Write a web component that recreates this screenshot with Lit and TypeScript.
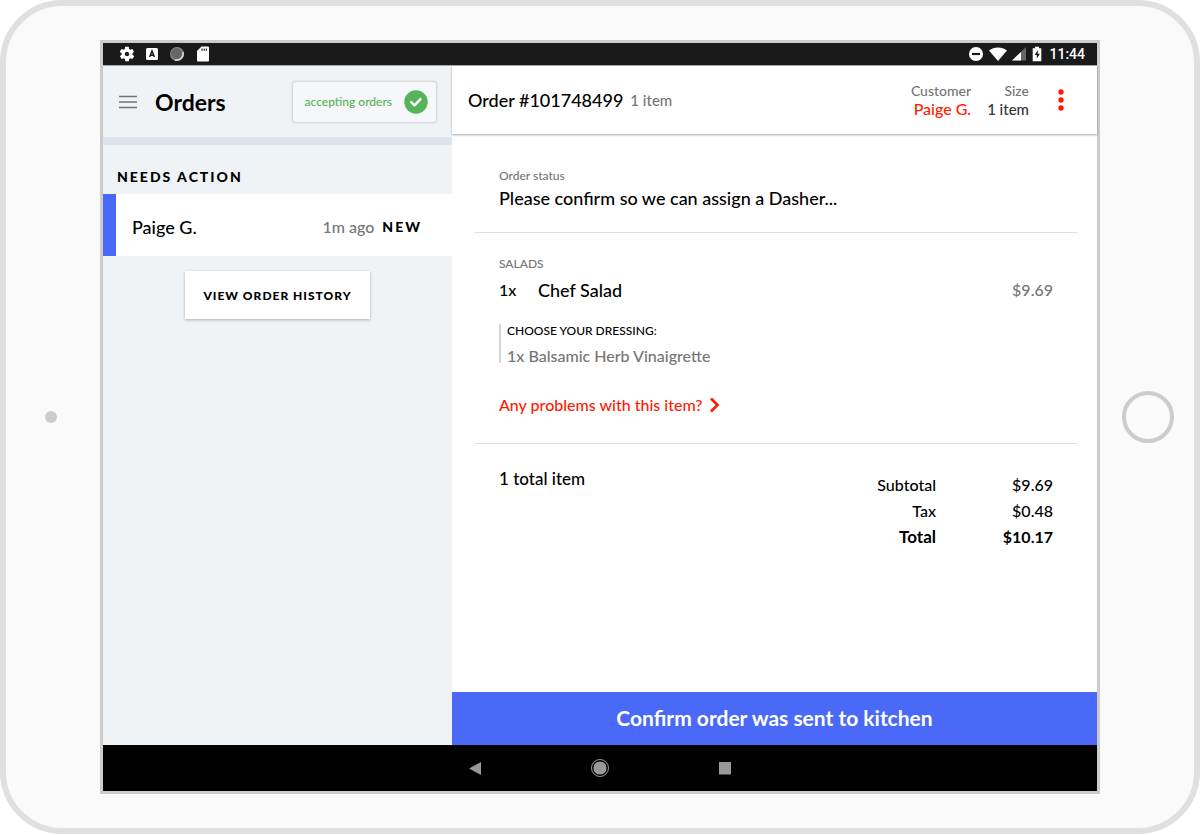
import { LitElement, html, css } from "lit";
import { customElement, property } from "lit/decorators.js";

@customElement("status-bar")
class StatusBar extends LitElement {
  static styles = css`
    :host {
      display: flex;
      align-items: center;
      justify-content: space-between;
      height: 23px;
      padding: 0 12px 0 16px;
      background: #1a1a1a;
      border-bottom: 1px solid #a8a8a8;
      box-sizing: border-box;
      color: #fff;
      font: 500 14px/20px Roboto, sans-serif;
    }
    .group {
      display: flex;
      align-items: center;
    }
    .left {
      gap: 9px;
    }
    .right {
      gap: 4px;
    }
    .time {
      padding-left: 1px;
    }
    svg {
      display: block;
    }
  `;
  render() {
    return html`
      <div class="group left">
        <svg width="16" height="16" viewBox="1 1 22 22" fill="#fff">
          <path d="M19.4 13c0-.3.1-.6.1-1s0-.7-.1-1l2.100-1.600c.2-.2.200-.400.100-.600l-2-3.500c-.1-.2-.4-.3-.6-.2l-2.500 1c-.5-.4-1.100-.7-1.700-1l-.4-2.600c0-.3-.2-.5-.5-.5h-4c-.2 0-.4.2-.5.400l-.4 2.700c-.6.2-1.100.6-1.700 1l-2.500-1c-.2-.1-.5 0-.6.200l-2 3.500c-.1.2-.1.500.1.600L4.600 11c0 .3-.1.600-.1 1s0 .7.1 1l-2.100 1.600c-.2.2-.2.400-.1.600l2 3.500c.1.2.4.3.6.2l2.500-1c.5.4 1.100.7 1.700 1l.4 2.600c0 .3.2.5.5.5h4c.2 0 .5-.2.500-.400l.4-2.700c.6-.3 1.200-.6 1.700-1l2.500 1c.2.100.5 0 .6-.200l2-3.500c.1-.2.1-.500-.1-.600zM12 15a3 3 0 1 1 0-6 3 3 0 0 1 0 6z" />
        </svg>
        <svg width="16" height="16" viewBox="0 0 16 16">
          <rect x="2" y="2" width="12" height="12" rx="1.500" fill="#fff" />
          <path d="M5.600 11 8 5l2.400 6M6.500 9.200h3" fill="none" stroke="#1a1a1a" stroke-width="1.500" />
        </svg>
        <svg width="16" height="16" viewBox="0 0 16 16">
          <circle cx="8" cy="8" r="7" fill="#8a8a8a" />
          <circle cx="7.500" cy="7.500" r="5.500" fill="#666" />
          <path d="M14 6a6.500 6.500 0 0 1-8 8" fill="none" stroke="#ddd" stroke-width="1.300" />
        </svg>
        <svg width="18" height="16" viewBox="-1 0 18 16">
          <path d="M6.500 .5H13a1 1 0 0 1 1 1v13a1 1 0 0 1-1 1H3a1 1 0 0 1-1-1V5z" fill="#fff" />
          <path d="M7 2.500v2.200M9.200 2.500v2.200M11.400 2.500v2.200" stroke="#1a1a1a" stroke-width="1.100" />
        </svg>
      </div>
      <div class="group right">
        <svg width="16" height="16" viewBox="0 0 16 16">
          <circle cx="8" cy="8" r="7" fill="#fff" />
          <path d="M4 8h8" stroke="#1a1a1a" stroke-width="2.200" />
        </svg>
        <svg width="20" height="16" viewBox="-1 0 20 16">
          <path d="M0 4.500C5 .4 13 .4 18 4.500L9 15z" fill="#fff" />
        </svg>
        <svg width="14" height="16" viewBox="0 0 14 16">
          <path d="M14 1v13.500H0z" fill="#666" />
          <path d="M9 6v8.500H0z" fill="#fff" />
        </svg>
        <svg width="14" height="16" viewBox="0 0 14 16">
          <path d="M5 .8h4v1.400h2.300v13H2.700v-13H5z" fill="#fff" />
          <path d="M7.800 4 4.800 9h2v3.800l3-5h-2z" fill="#1a1a1a" />
        </svg>
        <span class="time">11:44</span>
      </div>
    `;
  }
}

@customElement("order-sidebar")
class OrderSidebar extends LitElement {
  static styles = css`
    :host {
      display: block;
      background: #eff3f6;
    }
    button {
      font-family: inherit;
      cursor: pointer;
      color: inherit;
    }
    .head {
      display: flex;
      align-items: center;
      height: 71px;
      padding: 0 16px 0 12px;
      border-bottom: 8px solid #dde4eb;
    }
    .menu {
      display: flex;
      padding: 3px;
      border: 0;
      background: none;
    }
    h1 {
      flex: 1;
      margin: 0 0 0 14px;
      font-size: 23px;
      line-height: 28px;
      font-weight: 700;
    }
    .accepting {
      display: flex;
      align-items: center;
      gap: 12px;
      height: 40px;
      padding: 0 8px 0 12px;
      border: 0;
      border-radius: 3px;
      background: #f5f7fa;
      box-shadow: 0 0 2px 1px rgba(0, 0, 0, 0.14);
      color: #52b356;
      font-size: 12px;
      font-weight: 500;
    }
    h2 {
      margin: 0;
      padding: 22px 14px 7px;
      font-size: 14px;
      line-height: 20px;
      font-weight: 900;
      letter-spacing: 2px;
    }
    .order {
      display: flex;
      align-items: center;
      width: 100%;
      height: 62px;
      padding: 3px 30px 0 16px;
      border: 0;
      border-left: 13px solid #4a69f8;
      background: #fff;
      text-align: left;
      font-size: 18px;
      font-weight: 500;
    }
    .who {
      flex: 1;
    }
    .ago {
      color: #757575;
      font-size: 16px;
    }
    .new {
      margin-left: 8px;
      font-size: 14px;
      font-weight: 900;
      letter-spacing: 2px;
    }
    .history {
      display: block;
      height: 48px;
      margin: 15px auto 0;
      padding: 0 18px;
      border: 0;
      background: #fff;
      box-shadow: 0 1px 3px rgba(0, 0, 0, 0.28);
      font-size: 12px;
      font-weight: 900;
      letter-spacing: 1px;
    }
  `;
  render() {
    return html`
      <header class="head">
        <button class="menu" aria-label="Menu">
          <svg width="20" height="16" viewBox="0 0 20 16">
            <path d="M1 2.500h18M1 8h18M1 13.500h18" stroke="#757575" stroke-width="1.600" />
          </svg>
        </button>
        <h1>Orders</h1>
        <button class="accepting">
          accepting orders
          <svg width="24" height="24" viewBox="0 0 24 24">
            <circle cx="12" cy="12" r="11.700" fill="#56b35a" />
            <path d="m7.200 12.200 3.300 3.200 6-6.300" fill="none" stroke="#fff" stroke-width="2.400" stroke-linecap="round" stroke-linejoin="round" />
          </svg>
        </button>
      </header>
      <h2>NEEDS ACTION</h2>
      <button class="order">
        <span class="who">Paige G.</span>
        <span class="ago">1m ago</span>
        <span class="new">NEW</span>
      </button>
      <button class="history">VIEW ORDER HISTORY</button>
    `;
  }
}

@customElement("order-detail")
class OrderDetail extends LitElement {
  @property({ attribute: false }) totals = [
    { label: "Subtotal", amount: "$9.69" },
    { label: "Tax", amount: "$0.48" },
    { label: "Total", amount: "$10.17" },
  ];
  static styles = css`
    :host {
      display: flex;
      flex-direction: column;
      background: #fff;
      font-size: 16px;
      line-height: 24px;
      font-weight: 500;
    }
    button {
      font-family: inherit;
      cursor: pointer;
    }
    .head {
      display: flex;
      align-items: center;
      height: 68px;
      padding: 0 24px 0 16px;
      box-sizing: border-box;
      box-shadow: 0 1px 2px rgba(0, 0, 0, 0.35);
    }
    h2 {
      margin: 0;
      font-size: 18px;
      line-height: 24px;
      font-weight: 500;
    }
    .count {
      flex: 1;
      margin-left: 7px;
      color: #757575;
      font-size: 15px;
    }
    .fact {
      margin: 0 0 0 16px;
      text-align: right;
      font-size: 15px;
      line-height: 18px;
      color: #333;
    }
    .fact dt {
      font-size: 14px;
      color: #757575;
    }
    .fact dd {
      margin: 0;
    }
    .fact .customer {
      color: #ff1a00;
      font-size: 16px;
    }
    .more {
      display: flex;
      margin-left: 20px;
      padding: 0;
      border: 0;
      background: none;
    }
    .body {
      flex: 1;
      padding: 0 20px 0 23px;
    }
    section {
      padding: 0 24px;
      border-bottom: 1px solid #dddde3;
    }
    .status {
      padding-top: 32px;
      padding-bottom: 22px;
    }
    .items {
      padding-top: 21px;
      padding-bottom: 26px;
    }
    .sum {
      display: flex;
      justify-content: space-between;
      padding-top: 24px;
      border: 0;
    }
    .label {
      font-size: 12px;
      line-height: 20px;
      color: #757575;
    }
    p {
      margin: 0;
    }
    .lead {
      font-size: 18px;
    }
    .item {
      display: flex;
      margin-top: 4px;
    }
    .qty {
      width: 39px;
    }
    .name {
      flex: 1;
      font-size: 18px;
    }
    .price {
      color: #757575;
    }
    .options {
      margin-top: 22px;
      padding-left: 6px;
      border-left: 2px solid #d6d6d6;
      line-height: 14px;
    }
    .group {
      font-size: 12px;
    }
    .choice {
      margin-top: 11px;
      color: #757575;
    }
    .problem {
      display: inline-flex;
      align-items: center;
      gap: 6px;
      margin-top: 30px;
      vertical-align: top;
      color: #ff1a00;
      text-decoration: none;
    }
    .total-items {
      font-size: 17px;
      line-height: 22px;
    }
    table {
      margin-top: 4px;
      border-collapse: collapse;
      text-align: right;
    }
    th,
    td {
      padding: 1px 0;
      font-weight: 500;
    }
    td {
      width: 117px;
    }
    tr:last-child > * {
      font-weight: 700;
    }
    tr:last-child > th {
      font-size: 17px;
    }
    .confirm {
      height: 53px;
      padding: 0 0 3px;
      border: 0;
      background: #4a69f8;
      color: #fff;
      font-size: 21px;
      font-weight: 700;
    }
  `;
  render() {
    return html`
      <header class="head">
        <h2>Order #101748499</h2>
        <span class="count">1 item</span>
        <dl class="fact">
          <dt>Customer</dt>
          <dd class="customer">Paige G.</dd>
        </dl>
        <dl class="fact">
          <dt>Size</dt>
          <dd>1 item</dd>
        </dl>
        <button class="more" aria-label="More options">
          <svg width="24" height="24" viewBox="0 0 24 24" fill="#ff1a00">
            <circle cx="12" cy="4" r="2.700" />
            <circle cx="12" cy="12" r="2.700" />
            <circle cx="12" cy="20" r="2.700" />
          </svg>
        </button>
      </header>
      <div class="body">
        <section class="status">
          <p class="label">Order status</p>
          <p class="lead">Please confirm so we can assign a Dasher...</p>
        </section>
        <section class="items">
          <p class="label">SALADS</p>
          <div class="item">
            <span class="qty">1x</span>
            <span class="name">Chef Salad</span>
            <span class="price">$9.69</span>
          </div>
          <div class="options">
            <p class="group">CHOOSE YOUR DRESSING:</p>
            <p class="choice">1x Balsamic Herb Vinaigrette</p>
          </div>
          <a class="problem" href="#problem">
            Any problems with this item?
            <svg width="11" height="16" viewBox="0 0 11 16">
              <path d="m2 1.500 6.500 6.500L2 14.500" fill="none" stroke="#ff1a00" stroke-width="2.600" />
            </svg>
          </a>
        </section>
        <section class="sum">
          <p class="total-items">1 total item</p>
          <table>
            <tbody>
              ${this.totals.map((t) => html`<tr><th scope="row">${t.label}</th><td>${t.amount}</td></tr>`)}
            </tbody>
          </table>
        </section>
      </div>
      <button class="confirm">Confirm order was sent to kitchen</button>
    `;
  }
}

@customElement("app-root")
class AppRoot extends LitElement {
  static styles = css`
    :host {
      display: flex;
      min-height: 100vh;
      padding-bottom: 1px;
      box-sizing: border-box;
      background: #fff;
      color: #000;
      font-family: Lato, "Open Sans", sans-serif;
    }
    .device {
      flex: 1;
      display: grid;
      grid-template-columns: 94px 1fr 94px;
      align-items: center;
      justify-items: center;
      padding: 34px 0;
      border: 6px solid #e0e0e0;
      border-radius: 62px;
      background: #fafafa;
    }
    .camera {
      width: 12px;
      height: 12px;
      margin-right: 4px;
      border-radius: 50%;
      background: #ccc;
    }
    .home {
      width: 52px;
      height: 52px;
      margin-left: 2px;
      padding: 0;
      border: 4px solid #ccc;
      border-radius: 50%;
      background: #fafafa;
      box-sizing: border-box;
    }
    .screen {
      align-self: stretch;
      justify-self: stretch;
      display: flex;
      flex-direction: column;
      border: 3px solid #ccc;
    }
    .app {
      flex: 1;
      display: grid;
      grid-template-columns: minmax(0, 349fr) minmax(0, 645fr);
    }
    .nav {
      display: flex;
      justify-content: center;
      align-items: center;
      gap: 101px;
      height: 46px;
      background: #000;
    }
    .nav button {
      display: flex;
      padding: 0;
      border: 0;
      background: none;
    }
  `;
  render() {
    return html`
      <div class="device">
        <div class="camera"></div>
        <div class="screen">
          <status-bar></status-bar>
          <div class="app">
            <order-sidebar></order-sidebar>
            <order-detail></order-detail>
          </div>
          <nav class="nav">
            <button aria-label="Back">
              <svg width="24" height="24" viewBox="0 0 24 24"><path d="M6 12.500 18 6v13z" fill="#999" /></svg>
            </button>
            <button aria-label="Home">
              <svg width="24" height="24" viewBox="0 0 24 24">
                <circle cx="12" cy="12" r="8.500" fill="none" stroke="#999" stroke-width="1" />
                <circle cx="12" cy="12" r="6.600" fill="#999" />
              </svg>
            </button>
            <button aria-label="Recent apps">
              <svg width="24" height="24" viewBox="0 0 24 24"><path d="M6 6h12v12.500H6z" fill="#999" /></svg>
            </button>
          </nav>
        </div>
        <button class="home" aria-label="Home button"></button>
      </div>
    `;
  }
}
